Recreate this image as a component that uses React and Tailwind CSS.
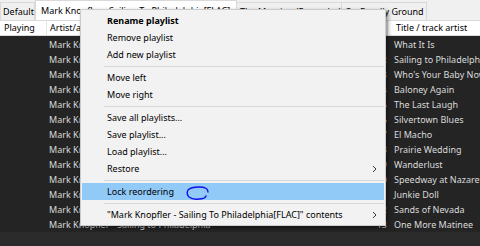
import React from 'react';

const TRACKS = [
  'What It Is',
  'Sailing to Philadelphia',
  "Who's Your Baby Now",
  'Baloney Again',
  'The Last Laugh',
  'Silvertown Blues',
  'El Macho',
  'Prairie Wedding',
  'Wanderlust',
  'Speedway at Nazareth',
  'Junkie Doll',
  'Sands of Nevada',
  'One More Matinee',
];

const Chevron = () => (
  <svg width="5" height="8" viewBox="0 0 5 8" className="text-[#333]">
    <path d="M1 1 L4 4 L1 7" fill="none" stroke="currentColor" strokeWidth="1" />
  </svg>
);

const Item = ({ label, bold, arrow, active }) => (
  <div className={`h-[17px] flex items-center justify-between pl-[25px] pr-[7px] text-[#000] ${active ? 'bg-[#91c9f7]' : ''}`}>
    <span className={`whitespace-nowrap ${bold ? 'font-bold' : ''}`}>{label}</span>
    {arrow && <Chevron />}
  </div>
);

const Sep = () => (
  <div className="h-[6px] flex items-center ml-[22px]">
    <div className="h-px w-full bg-[#d7d7d7]" />
  </div>
);

export default function App() {
  return (
    <div className="w-[480px] h-[246px] relative overflow-hidden bg-[#f0f0f0] text-[9px] font-['Noto_Sans',sans-serif] flex flex-col">
      {/* tab strip */}
      <div className="h-[20px] flex items-end shrink-0">
        <div className="w-[35px] h-[18px] pl-[2px] flex items-center bg-[#f0f0f0] border border-b-0 border-[#d9d9d9] whitespace-nowrap">Default</div>
        <div className="w-[202px] h-[20px] pl-[5px] flex items-center bg-white border border-b-0 border-[#d9d9d9] whitespace-nowrap overflow-hidden">Mark Knopfler - Sailing To Philadelphia[FLAC]</div>
        <div className="w-[105px] h-[18px] pl-[3px] flex items-center bg-[#f0f0f0] border-r border-t border-[#d9d9d9] whitespace-nowrap overflow-hidden">The Mention (Expanded)</div>
        <div className="w-[85px] h-[18px] pl-[3px] flex items-center bg-[#f0f0f0] border-r border-t border-[#d9d9d9] whitespace-nowrap overflow-hidden">On Deadly Ground</div>
      </div>

      {/* column headers */}
      <div className="h-[16px] flex bg-white border-y border-[#d9d9d9] shrink-0 text-[#000]">
        <div className="w-[47px] pl-[4px] flex items-center border-r border-[#e5e5e5]">Playing</div>
        <div className="w-[341px] pl-[3px] flex items-center border-r border-[#e5e5e5] whitespace-nowrap">Artist/album</div>
        <div className="flex-1 pl-[8px] flex items-center whitespace-nowrap overflow-hidden">Title / track artist</div>
      </div>

      {/* playlist */}
      <div className="flex-1 bg-[#2b2b2b] text-[#dadada]">
        <div className="pt-px bg-[#242424]">
          {TRACKS.map((t, i) => (
            <div key={t} className="h-[15px] flex items-center whitespace-nowrap">
              <div className="w-[47px]" />
              <div className="w-[313px] pl-[2px] overflow-hidden">Mark Knopfler - Sailing to Philadelphia</div>
              <div className="w-[28px] pr-[1px] text-right">{i + 1}</div>
              <div className="flex-1 pl-[6px] overflow-hidden">{t}</div>
            </div>
          ))}
        </div>
      </div>

      {/* context menu */}
      <div className="absolute left-[80px] top-[9px] w-[306px] bg-[#f2f2f2] border border-[#cccccc] py-[2px] px-px shadow-[2px_2px_4px_rgba(0,0,0,0.45)]">
        <Item label="Rename playlist" bold />
        <Item label="Remove playlist" />
        <Item label="Add new playlist" />
        <Sep />
        <Item label="Move left" />
        <Item label="Move right" />
        <Sep />
        <Item label="Save all playlists..." />
        <Item label="Save playlist..." />
        <Item label="Load playlist..." />
        <Item label="Restore" arrow />
        <Sep />
        <div className="relative">
          <Item label="Lock reordering" active />
          <svg className="absolute left-[103px] top-[1px]" width="26" height="17" viewBox="0 0 26 17">
            <path d="M23 8 Q23 3 14 3 Q6 3 3 6 Q1 10 4 13 Q8 16 14 15 Q20 15 21 12" fill="none" stroke="#1010ee" strokeWidth="1.4" strokeLinecap="round" />
          </svg>
        </div>
        <Sep />
        <Item label={'"Mark Knopfler - Sailing To Philadelphia[FLAC]" contents'} arrow />
      </div>
    </div>
  );
}
